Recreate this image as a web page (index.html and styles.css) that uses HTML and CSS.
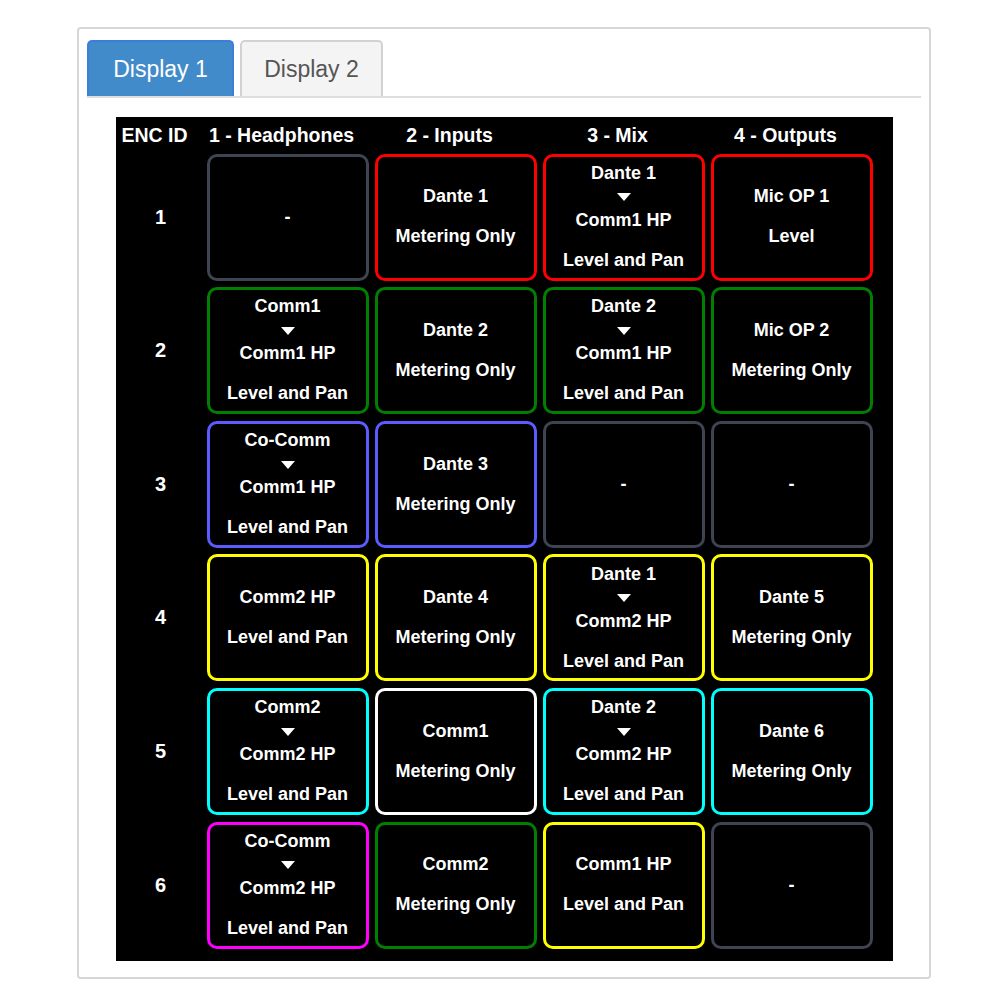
FILE: index.html
```html
<!DOCTYPE html>
<html lang="en">
<head>
    <meta charset="UTF-8">
    <title>Encoder Map</title>
    <link rel="stylesheet" href="styles.css">
</head>
<body>
    <div class="panel">
        <ul class="tabs">
            <li class="tab active">Display 1</li>
            <li class="tab">Display 2</li>
        </ul>
        <div class="board">
            <div class="head">ENC ID</div>
            <div class="head">1 - Headphones</div>
            <div class="head">2 - Inputs</div>
            <div class="head">3 - Mix</div>
            <div class="head">4 - Outputs</div>

            <!-- row 1 -->
            <div class="enc">1</div>
            <div class="cell off"><span>-</span></div>
            <div class="cell red"><div class="route"><span>Dante 1</span></div><div class="mode">Metering Only</div></div>
            <div class="cell red"><div class="route"><span>Dante 1</span><i class="arrow"></i><span>Comm1 HP</span></div><div class="mode">Level and Pan</div></div>
            <div class="cell red"><div class="route"><span>Mic OP 1</span></div><div class="mode">Level</div></div>

            <!-- row 2 -->
            <div class="enc">2</div>
            <div class="cell green"><div class="route"><span>Comm1</span><i class="arrow"></i><span>Comm1 HP</span></div><div class="mode">Level and Pan</div></div>
            <div class="cell green"><div class="route"><span>Dante 2</span></div><div class="mode">Metering Only</div></div>
            <div class="cell green"><div class="route"><span>Dante 2</span><i class="arrow"></i><span>Comm1 HP</span></div><div class="mode">Level and Pan</div></div>
            <div class="cell green"><div class="route"><span>Mic OP 2</span></div><div class="mode">Metering Only</div></div>

            <!-- row 3 -->
            <div class="enc">3</div>
            <div class="cell blue"><div class="route"><span>Co-Comm</span><i class="arrow"></i><span>Comm1 HP</span></div><div class="mode">Level and Pan</div></div>
            <div class="cell blue"><div class="route"><span>Dante 3</span></div><div class="mode">Metering Only</div></div>
            <div class="cell off"><span>-</span></div>
            <div class="cell off"><span>-</span></div>

            <!-- row 4 -->
            <div class="enc">4</div>
            <div class="cell yellow"><div class="route"><span>Comm2 HP</span></div><div class="mode">Level and Pan</div></div>
            <div class="cell yellow"><div class="route"><span>Dante 4</span></div><div class="mode">Metering Only</div></div>
            <div class="cell yellow"><div class="route"><span>Dante 1</span><i class="arrow"></i><span>Comm2 HP</span></div><div class="mode">Level and Pan</div></div>
            <div class="cell yellow"><div class="route"><span>Dante 5</span></div><div class="mode">Metering Only</div></div>

            <!-- row 5 -->
            <div class="enc">5</div>
            <div class="cell cyan"><div class="route"><span>Comm2</span><i class="arrow"></i><span>Comm2 HP</span></div><div class="mode">Level and Pan</div></div>
            <div class="cell white"><div class="route"><span>Comm1</span></div><div class="mode">Metering Only</div></div>
            <div class="cell cyan"><div class="route"><span>Dante 2</span><i class="arrow"></i><span>Comm2 HP</span></div><div class="mode">Level and Pan</div></div>
            <div class="cell cyan"><div class="route"><span>Dante 6</span></div><div class="mode">Metering Only</div></div>

            <!-- row 6 -->
            <div class="enc">6</div>
            <div class="cell magenta"><div class="route"><span>Co-Comm</span><i class="arrow"></i><span>Comm2 HP</span></div><div class="mode">Level and Pan</div></div>
            <div class="cell green"><div class="route"><span>Comm2</span></div><div class="mode">Metering Only</div></div>
            <div class="cell yellow"><div class="route"><span>Comm1 HP</span></div><div class="mode">Level and Pan</div></div>
            <div class="cell off"><span>-</span></div>
        </div>
    </div>
</body>
</html>
```

FILE: styles.css
```css
*{
    margin: 0;
    padding: 0;
    box-sizing: border-box;
}
body{
    background: white;
    font-family: "Liberation Sans", Arial, Helvetica, sans-serif;
}
.panel{
    width: 854px;
    height: 952px;
    margin: 27px 0 0 77px;
    padding: 11px 8px 0 8px;
    border: 2px solid #d6d6d6;
    border-radius: 4px;
}
.tabs{
    list-style: none;
    display: flex;
    gap: 6px;
    border-bottom: 2px solid #dedede;
}
.tab{
    height: 56px;
    line-height: 54px;
    font-size: 23px;
    text-align: center;
    color: #555;
    background: #f4f4f4;
    border: 2px solid #d2d2d2;
    border-bottom: none;
    border-radius: 5px 5px 0 0;
}
.tab.active{
    width: 147px;
    color: white;
    background: #428bca;
    border-color: #3d7fd8;
}
.tab:not(.active){
    width: 143px;
}
.board{
    width: 777px;
    margin: 19px auto 0;
    padding: 6px 20px 12px 5px;
    background: black;
    color: white;
    display: grid;
    grid-template-columns: 80px repeat(4, 162px);
    grid-template-rows: 24px;
    grid-auto-rows: 127px;
    column-gap: 6px;
    row-gap: 6.6px;
    font-weight: bold;
    font-size: 18px;
}
.head{
    text-align: center;
    line-height: 24px;
    font-size: 19.5px;
    white-space: nowrap;
    margin-right: 12px;
}
.head:first-child{
    text-align: left;
    margin: 0 0 0 1px;
}
.enc{
    display: flex;
    align-items: center;
    justify-content: center;
    font-size: 20px;
}
.cell{
    border: 3px solid #3e4451;
    border-radius: 10px;
    display: flex;
    flex-direction: column;
    align-items: center;
    justify-content: center;
    text-align: center;
}
.route{
    display: flex;
    flex-direction: column;
    align-items: center;
    line-height: 23.5px;
}
.mode{
    line-height: 23.5px;
    margin-top: 16.5px;
}
.arrow{
    display: block;
    height: 23.5px;
    width: 14px;
    position: relative;
}
.arrow::after{
    content: "";
    position: absolute;
    left: 0;
    top: 8px;
    border-left: 7px solid transparent;
    border-right: 7px solid transparent;
    border-top: 8px solid white;
}
.red{ border-color: #ff0000; }
.green{ border-color: #008000; }
.blue{ border-color: #5b5bff; }
.yellow{ border-color: #ffff00; }
.cyan{ border-color: #00ffff; }
.white{ border-color: #ffffff; }
.magenta{ border-color: #ff00ff; }
```
